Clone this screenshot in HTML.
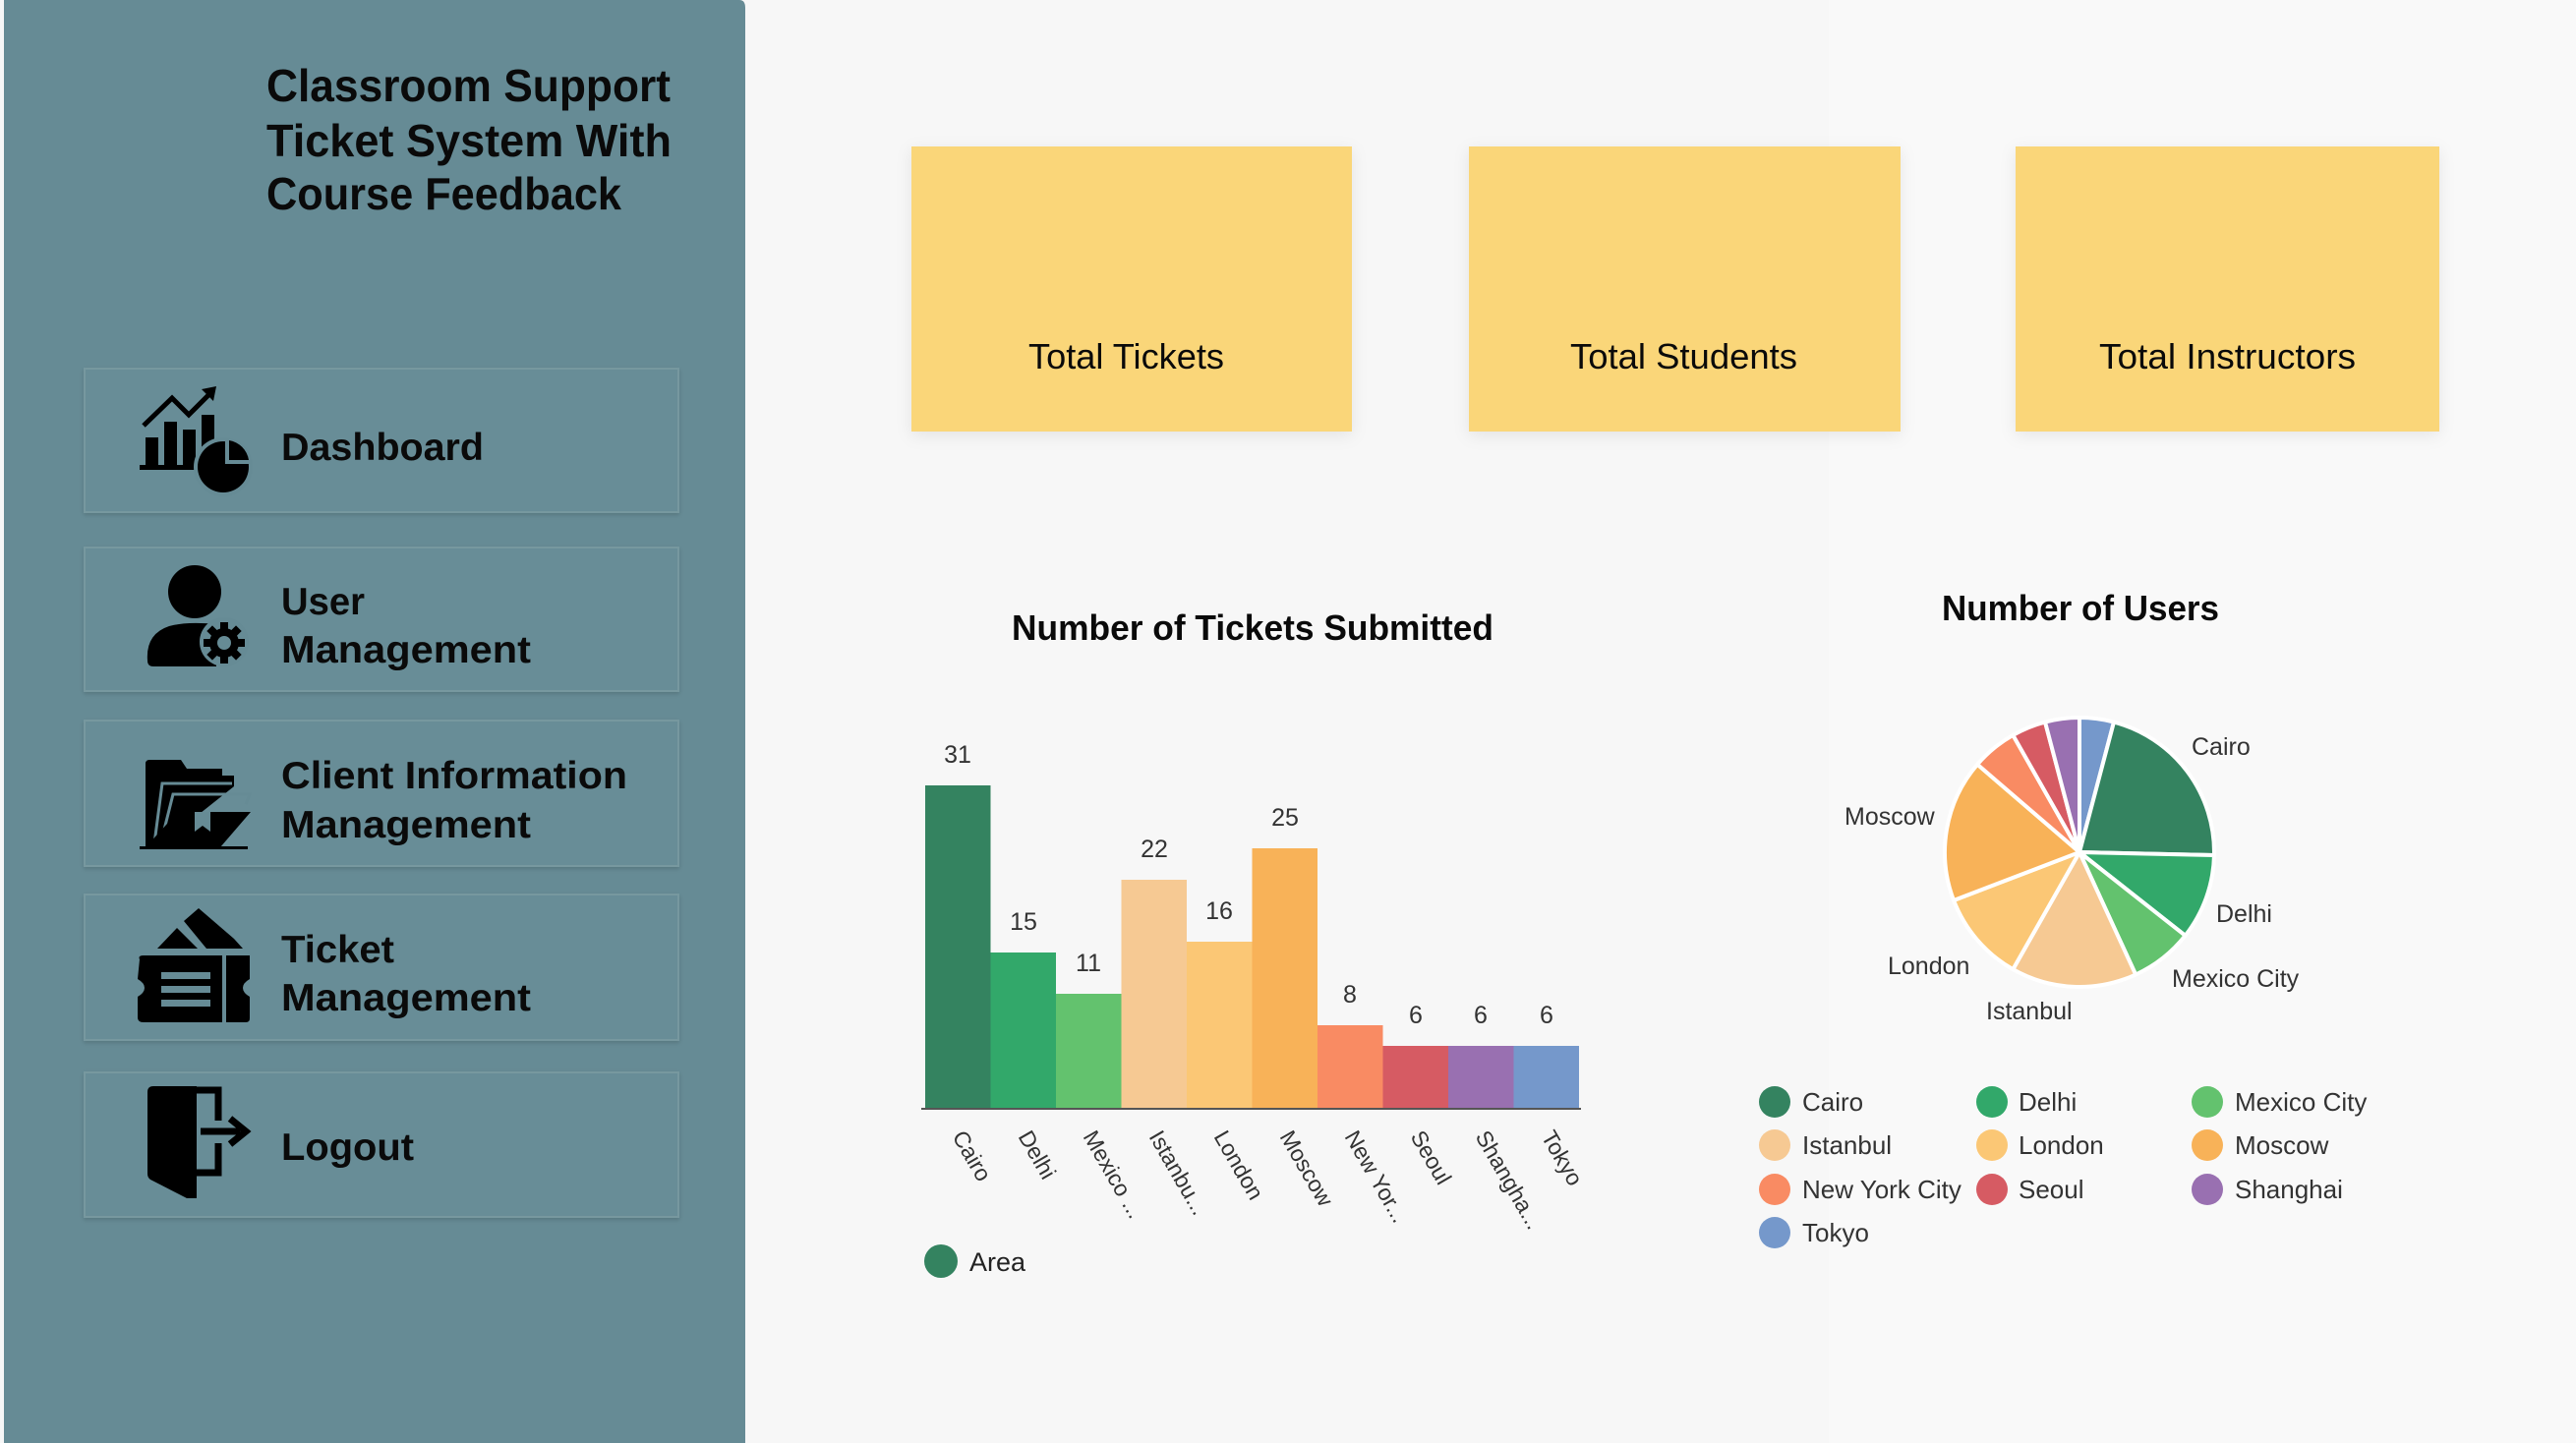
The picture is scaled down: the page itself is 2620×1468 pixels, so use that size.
<!DOCTYPE html>
<html><head><meta charset="utf-8">
<style>
html,body{margin:0;padding:0;width:2620px;height:1468px;overflow:hidden;background:#f7f7f7}
svg{display:block}
text{font-family:"Liberation Sans","DejaVu Sans",sans-serif}
</style></head>
<body>
<svg width="2620" height="1468" viewBox="0 0 2620 1468" xmlns="http://www.w3.org/2000/svg">
<defs>
<filter id="sh" x="-10%" y="-10%" width="120%" height="130%"><feDropShadow dx="0" dy="4" stdDeviation="8" flood-color="#000" flood-opacity="0.08"/></filter>
<filter id="sh2" x="-5%" y="-10%" width="110%" height="130%"><feDropShadow dx="0" dy="2" stdDeviation="2" flood-color="#000" flood-opacity="0.15"/></filter>
</defs>
<rect width="2620" height="1468" fill="#f7f7f7"/>
<rect x="1860" y="0" width="760" height="1468" fill="#f9f9f9"/>
<!-- sidebar -->
<path d="M4 0 H752 Q758 0 758 8 V1468 H4 Z" fill="#668b95"/>
<g font-weight="bold" font-size="46" fill="#0a0a0a">
<text x="271" y="103" textLength="411" lengthAdjust="spacingAndGlyphs">Classroom Support</text>
<text x="271" y="159" textLength="412" lengthAdjust="spacingAndGlyphs">Ticket System With</text>
<text x="271" y="213" textLength="361" lengthAdjust="spacingAndGlyphs">Course Feedback</text>
</g>
<!-- nav boxes -->
<g fill="#678d97" stroke="#77989f" stroke-width="2" filter="url(#sh2)">
<rect x="86" y="375" width="604" height="146"/>
<rect x="86" y="557" width="604" height="146"/>
<rect x="86" y="733" width="604" height="148"/>
<rect x="86" y="910" width="604" height="148"/>
<rect x="86" y="1091" width="604" height="147"/>
</g>
<g font-weight="bold" font-size="39" fill="#0a0a0a">
<text x="286" y="468" textLength="206" lengthAdjust="spacingAndGlyphs">Dashboard</text>
<text x="286" y="625" textLength="85" lengthAdjust="spacingAndGlyphs">User</text>
<text x="286" y="674" textLength="254" lengthAdjust="spacingAndGlyphs">Management</text>
<text x="286" y="802" textLength="352" lengthAdjust="spacingAndGlyphs">Client Information</text>
<text x="286" y="852" textLength="254" lengthAdjust="spacingAndGlyphs">Management</text>
<text x="286" y="979" textLength="115" lengthAdjust="spacingAndGlyphs">Ticket</text>
<text x="286" y="1028" textLength="254" lengthAdjust="spacingAndGlyphs">Management</text>
<text x="286" y="1180" textLength="135" lengthAdjust="spacingAndGlyphs">Logout</text>
</g>
<!-- dashboard icon -->
<g fill="#000">
<rect x="142" y="473" width="62" height="5"/>
<rect x="148" y="445" width="13" height="30"/>
<rect x="167" y="429" width="13" height="46"/>
<rect x="186" y="437" width="13" height="38"/>
<rect x="205" y="422" width="13" height="40"/>
<circle cx="227" cy="475" r="30" fill="#668b95"/>
<circle cx="227" cy="475" r="26"/>
<path d="M229 472 V446 A28 28 0 0 1 255 472 Z" fill="#668b95"/>
<path d="M233 468 V448 A24 24 0 0 1 253 468 Z"/>
<path d="M146 433 L175 405 L192 422 L214 400" fill="none" stroke="#000" stroke-width="5"/>
<path d="M205 396 L220 393 L217 408 Z"/>
</g>
<!-- user icon -->
<g fill="#000">
<circle cx="198" cy="602" r="27"/>
<path d="M150 672 Q148 645 172 637 Q190 632 220 635 L220 678 L156 678 Q150 678 150 672 Z"/>
<circle cx="228" cy="653" r="25" fill="#668b95"/>
<g transform="translate(228 654)">
<circle r="15"/>
<g>
<rect x="-4" y="-21" width="8" height="42"/>
<rect x="-4" y="-21" width="8" height="42" transform="rotate(45)"/>
<rect x="-4" y="-21" width="8" height="42" transform="rotate(90)"/>
<rect x="-4" y="-21" width="8" height="42" transform="rotate(135)"/>
</g>
<circle r="7" fill="#668b95"/>
</g>
</g>
<!-- folder icon -->
<g>
<path d="M148 777 Q148 773 152 773 L184 773 L190 782 L226 782 L226 789 L238 789 L238 800 L160 862 L148 862 Z" fill="#000"/>
<path d="M157 858 L165 797 L236 797" fill="none" stroke="#668b95" stroke-width="3"/>
<path d="M163 860 L176 808 L254 808 L250 818" fill="none" stroke="#668b95" stroke-width="3"/>
<path d="M181 826 L255 826 L224 862 L148 862 Z" fill="#000"/>
<path d="M198 826 L214 826 L214 846 L206 840 L198 846 Z" fill="#668b95"/>
<rect x="142" y="861" width="110" height="3" fill="#000"/>
</g>
<!-- ticket icon -->
<g fill="#000">
<path d="M160 965 L180 944 L201 965 Z"/>
<path d="M187 937 L202 924 L238 955 L247 965 L210 965 Z"/>
<path d="M142 976 Q140 972 146 972 L254 972 L254 996 Q247 1000 247 1005 Q247 1010 254 1014 L254 1036 Q254 1040 250 1040 L146 1040 Q140 1040 140 1035 L140 1014 Q147 1010 147 1005 Q147 1000 140 996 Z"/>
<g fill="#668b95">
<rect x="164" y="989" width="50" height="7"/>
<rect x="164" y="1003" width="50" height="7"/>
<rect x="164" y="1017" width="50" height="7"/>
<rect x="226" y="972" width="4" height="68"/>
</g>
</g>
<!-- logout icon -->
<g>
<path d="M150 1111 Q150 1105 156 1105 L200 1105 L200 1219 L190 1219 L153 1200 Q150 1198 150 1194 Z" fill="#000"/>
<path d="M198 1109 H222 V1140 M222 1163 V1193 H198" fill="none" stroke="#000" stroke-width="7"/>
<path d="M204 1151 H244" stroke="#000" stroke-width="7"/>
<path d="M234 1138 L250 1151 L234 1164" fill="none" stroke="#000" stroke-width="7"/>
</g>
<!-- cards -->
<g fill="#fad679" filter="url(#sh)">
<rect x="927" y="149" width="448" height="290"/>
<rect x="1494" y="149" width="439" height="290"/>
<rect x="2050" y="149" width="431" height="290"/>
</g>
<g font-size="36" fill="#0a0a0a">
<text x="1046" y="375" textLength="199" lengthAdjust="spacingAndGlyphs">Total Tickets</text>
<text x="1597" y="375" textLength="231" lengthAdjust="spacingAndGlyphs">Total Students</text>
<text x="2135" y="375" textLength="261" lengthAdjust="spacingAndGlyphs">Total Instructors</text>
</g>
<!-- bar chart -->
<text x="1029" y="651" font-size="36" font-weight="bold" fill="#0a0a0a" textLength="490" lengthAdjust="spacingAndGlyphs">Number of Tickets Submitted</text>
<g>
<rect x="941" y="799" width="66.5" height="329" fill="#348360"/>
<rect x="1007.5" y="969" width="66.5" height="159" fill="#32a86a"/>
<rect x="1074" y="1011" width="66.5" height="117" fill="#63c26e"/>
<rect x="1140.5" y="895" width="66.5" height="233" fill="#f6c993"/>
<rect x="1207" y="958" width="66.5" height="170" fill="#fbc775"/>
<rect x="1273.5" y="863" width="66.5" height="265" fill="#f8b258"/>
<rect x="1340" y="1043" width="66.5" height="85" fill="#f98b63"/>
<rect x="1406.5" y="1064" width="66.5" height="64" fill="#d65b63"/>
<rect x="1473" y="1064" width="66.5" height="64" fill="#9970b1"/>
<rect x="1539.5" y="1064" width="66.5" height="64" fill="#7598cb"/>
<rect x="937" y="1127" width="671" height="2" fill="#555"/>
</g>
<g font-size="25" fill="#333" text-anchor="middle">
<text x="974" y="776">31</text>
<text x="1041" y="946">15</text>
<text x="1107" y="988">11</text>
<text x="1174" y="872">22</text>
<text x="1240" y="935">16</text>
<text x="1307" y="840">25</text>
<text x="1373" y="1020">8</text>
<text x="1440" y="1041">6</text>
<text x="1506" y="1041">6</text>
<text x="1573" y="1041">6</text>
</g>
<g font-size="23" fill="#333">
<text transform="translate(968 1156) rotate(60)">Cairo</text>
<text transform="translate(1035 1156) rotate(60)">Delhi</text>
<text transform="translate(1101 1156) rotate(60)">Mexico ...</text>
<text transform="translate(1168 1156) rotate(60)">Istanbu...</text>
<text transform="translate(1234 1156) rotate(60)">London</text>
<text transform="translate(1301 1156) rotate(60)">Moscow</text>
<text transform="translate(1367 1156) rotate(60)">New Yor...</text>
<text transform="translate(1434 1156) rotate(60)">Seoul</text>
<text transform="translate(1500 1156) rotate(60)">Shangha...</text>
<text transform="translate(1567 1156) rotate(60)">Tokyo</text>
</g>
<circle cx="957" cy="1283" r="17" fill="#348360"/>
<text x="986" y="1293" font-size="27" fill="#222">Area</text>
<!-- pie -->
<text x="1975" y="631" font-size="36" font-weight="bold" fill="#0a0a0a" textLength="282" lengthAdjust="spacingAndGlyphs">Number of Users</text>
<g stroke="#fff" stroke-width="4" stroke-linejoin="round">
<path d="M2115 867 L2115 730 A137 137 0 0 1 2149.98 734.53 Z" fill="#7598cb"/>
<path d="M2115 867 L2149.98 734.53 A137 137 0 0 1 2251.97 869.94 Z" fill="#348360"/>
<path d="M2115 867 L2251.97 869.94 A137 137 0 0 1 2222.61 951.78 Z" fill="#32a86a"/>
<path d="M2115 867 L2222.61 951.78 A137 137 0 0 1 2172.17 991.51 Z" fill="#63c26e"/>
<path d="M2115 867 L2172.17 991.51 A137 137 0 0 1 2047.35 986.14 Z" fill="#f6c993"/>
<path d="M2115 867 L2047.35 986.14 A137 137 0 0 1 1987.07 916.00 Z" fill="#fbc775"/>
<path d="M2115 867 L1987.07 916.00 A137 137 0 0 1 2011.14 777.66 Z" fill="#f8b258"/>
<path d="M2115 867 L2011.14 777.66 A137 137 0 0 1 2047.35 747.86 Z" fill="#f98b63"/>
<path d="M2115 867 L2047.35 747.86 A137 137 0 0 1 2080.02 734.53 Z" fill="#d65b63"/>
<path d="M2115 867 L2080.02 734.53 A137 137 0 0 1 2115 730 Z" fill="#9970b1"/>
</g>
<g font-size="25" fill="#333">
<text x="2229" y="768">Cairo</text>
<text x="1876" y="839">Moscow</text>
<text x="2254" y="938">Delhi</text>
<text x="1920" y="991">London</text>
<text x="2209" y="1004">Mexico City</text>
<text x="2020" y="1037">Istanbul</text>
</g>
<g>
<circle cx="1805" cy="1121" r="16" fill="#348360"/>
<circle cx="2026" cy="1121" r="16" fill="#32a86a"/>
<circle cx="2245" cy="1121" r="16" fill="#63c26e"/>
<circle cx="1805" cy="1165" r="16" fill="#f6c993"/>
<circle cx="2026" cy="1165" r="16" fill="#fbc775"/>
<circle cx="2245" cy="1165" r="16" fill="#f8b258"/>
<circle cx="1805" cy="1210" r="16" fill="#f98b63"/>
<circle cx="2026" cy="1210" r="16" fill="#d65b63"/>
<circle cx="2245" cy="1210" r="16" fill="#9970b1"/>
<circle cx="1805" cy="1254" r="16" fill="#7598cb"/>
</g>
<g font-size="26" fill="#333">
<text x="1833" y="1130">Cairo</text>
<text x="2053" y="1130">Delhi</text>
<text x="2273" y="1130">Mexico City</text>
<text x="1833" y="1174">Istanbul</text>
<text x="2053" y="1174">London</text>
<text x="2273" y="1174">Moscow</text>
<text x="1833" y="1219">New York City</text>
<text x="2053" y="1219">Seoul</text>
<text x="2273" y="1219">Shanghai</text>
<text x="1833" y="1263">Tokyo</text>
</g>
</svg>
</body></html>
